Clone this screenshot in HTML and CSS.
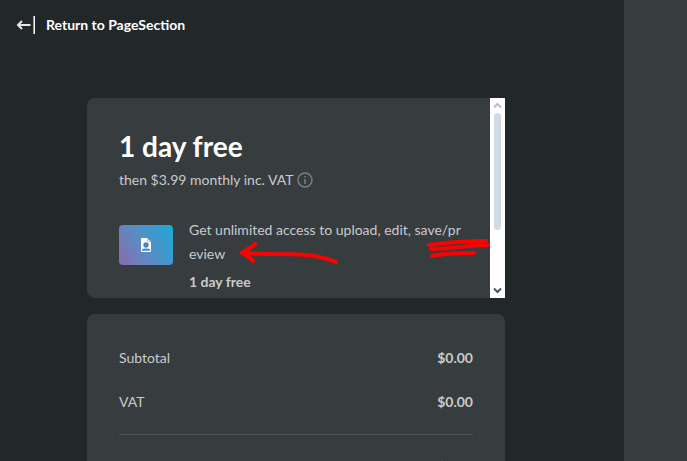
FILE: index.html
```html
<!DOCTYPE html>
<html lang="en">
<head>
    <meta charset="UTF-8">
    <meta name="viewport" content="width=device-width, initial-scale=1.0">
    <title>Checkout</title>
    <link rel="stylesheet" href="styles.css">
</head>
<body>
    <main class="checkout">
        <a class="back-link" href="#">
            <svg class="back-icon" width="20" height="20" viewBox="0 0 20 20" fill="none">
                <path d="M2 10H14.5M6 6L2 10L6 14" stroke="#e4e6e7" stroke-width="2"/>
                <path d="M18.2 1V19" stroke="#fff" stroke-width="1.5"/>
            </svg>
            Return to PageSection
        </a>

        <div class="summary">
            <section class="card plan">
                <div class="plan-body">
                    <h1>1 day free</h1>
                    <p class="price">
                        then $3.99 monthly inc. VAT
                        <svg width="16" height="16" viewBox="0 0 16 16" fill="none">
                            <circle cx="8" cy="8" r="7" stroke="#7b7e80" stroke-width="1.5"/>
                            <path d="M8 7V12M8 4V5.5" stroke="#7b7e80" stroke-width="1.5"/>
                        </svg>
                    </p>
                    <div class="product">
                        <div class="thumb">
                            <svg width="12" height="14" viewBox="0 0 12 14">
                                <path d="M2 0H7L11 4V13Q11 14 10 14H2Q1 14 1 13V1Q1 0 2 0Z" fill="#fff"/>
                                <circle cx="6" cy="7" r="2.7" fill="#4b86bb"/>
                                <path d="M2 12.8V12Q2 10.6 6 10.6Q10 10.6 10 12V12.8Z" fill="#4b86bb"/>
                                <path d="M7.5 1V3.5H10" fill="none" stroke="#a5c8e3"/>
                            </svg>
                        </div>
                        <div class="product-text">
                            <p>Get unlimited access to upload, edit, save/preview</p>
                            <strong>1 day free</strong>
                        </div>
                    </div>
                </div>
                <div class="scrollbar">
                    <svg width="9" height="7" viewBox="0 0 9 7" fill="none">
                        <path d="M1 5.5L4.5 2L8 5.5" stroke="#bcbcbc" stroke-width="2"/>
                    </svg>
                    <div class="track"><div class="thumb-bar"></div></div>
                    <svg width="9" height="7" viewBox="0 0 9 7" fill="none">
                        <path d="M1 1.5L4.5 5L8 1.5" stroke="#505050" stroke-width="2"/>
                    </svg>
                </div>

                <!-- pen marks over the card -->
                <svg class="marks" width="260" height="32" viewBox="0 0 260 32" fill="none" stroke="#f00" stroke-width="4" stroke-linecap="round" stroke-linejoin="round">
                    <path d="M97 24C78 16 58 16 32 16L3 15M16 6C15 9 8 10 3 15C7 18 12 19 14 23"/>
                    <path d="M190 7C210 4 228 3 247 3M249 7C232 7 214 11 192 11M193 18C206 15 220 15 235 15"/>
                </svg>
            </section>

            <section class="card totals">
                <dl>
                    <div class="row"><dt>Subtotal</dt><dd>$0.00</dd></div>
                    <div class="row"><dt>VAT</dt><dd>$0.00</dd></div>
                    <div class="row total"><dt>Total</dt><dd>$0.00</dd></div>
                </dl>
            </section>
        </div>
    </main>
    <aside class="payment"></aside>
</body>
</html>
```
FILE: styles.css
```css
* {
    margin: 0;
    padding: 0;
    box-sizing: border-box;
}

body {
    display: grid;
    grid-template-columns: 1fr 63px;
    height: 100vh;
    overflow: hidden;
    background-color: #22272a;
    color: #c8cbcd;
    font-family: Lato, sans-serif;
    font-size: 14px;
    line-height: 24px;
}

/* Left column */
.checkout {
    padding: 13px 16px;
}

.back-link {
    display: flex;
    align-items: center;
    gap: 10px;
    color: #fff;
    font-weight: bold;
    text-decoration: none;
}

.summary {
    display: grid;
    gap: 16px;
    max-width: 489px;
    padding-left: 71px;
    margin-top: 61px;
}

.card {
    background-color: #373c3f;
    border-radius: 8px;
}

/* Plan card */
.plan {
    position: relative;
    display: flex;
    height: 200px;
}

.plan-body {
    flex: 1;
    padding: 32px 24px 0 32px;
    overflow: hidden;
}

.plan h1 {
    color: #fff;
    font-size: 28px;
    line-height: 32px;
}

.price {
    display: flex;
    align-items: center;
    gap: 4px;
    margin-top: 6px;
}

.product {
    display: flex;
    gap: 16px;
    margin-top: 26px;
}

.thumb {
    display: flex;
    flex: none;
    align-items: center;
    justify-content: center;
    width: 54px;
    height: 40px;
    margin-top: 7px;
    border-radius: 4px;
    background: linear-gradient(60deg, #8b6bab, #5a8cc4 45%, #1da8d8);
}

.product-text {
    word-break: break-all;
}

.product-text strong {
    display: block;
    line-height: 32px;
}

/* Scrollbar */
.scrollbar {
    display: flex;
    flex-direction: column;
    align-items: center;
    gap: 4px;
    width: 15px;
    padding: 4px 0;
    background-color: #fff;
}

.track {
    flex: 1;
    width: 7px;
}

.thumb-bar {
    height: 69%;
    border-radius: 4px;
    background-color: #d0dae3;
}

.marks {
    position: absolute;
    right: 6px;
    bottom: 28px;
}

/* Totals card */
.totals {
    padding: 22px 32px;
}

.row {
    display: flex;
    align-items: center;
    justify-content: space-between;
    height: 44px;
}

.row dd {
    font-weight: bold;
}

.total {
    height: 64px;
    margin-top: 10px;
    border-top: 1px solid #505456;
}

/* Right column */
.payment {
    background-color: #373c3f;
}
```
